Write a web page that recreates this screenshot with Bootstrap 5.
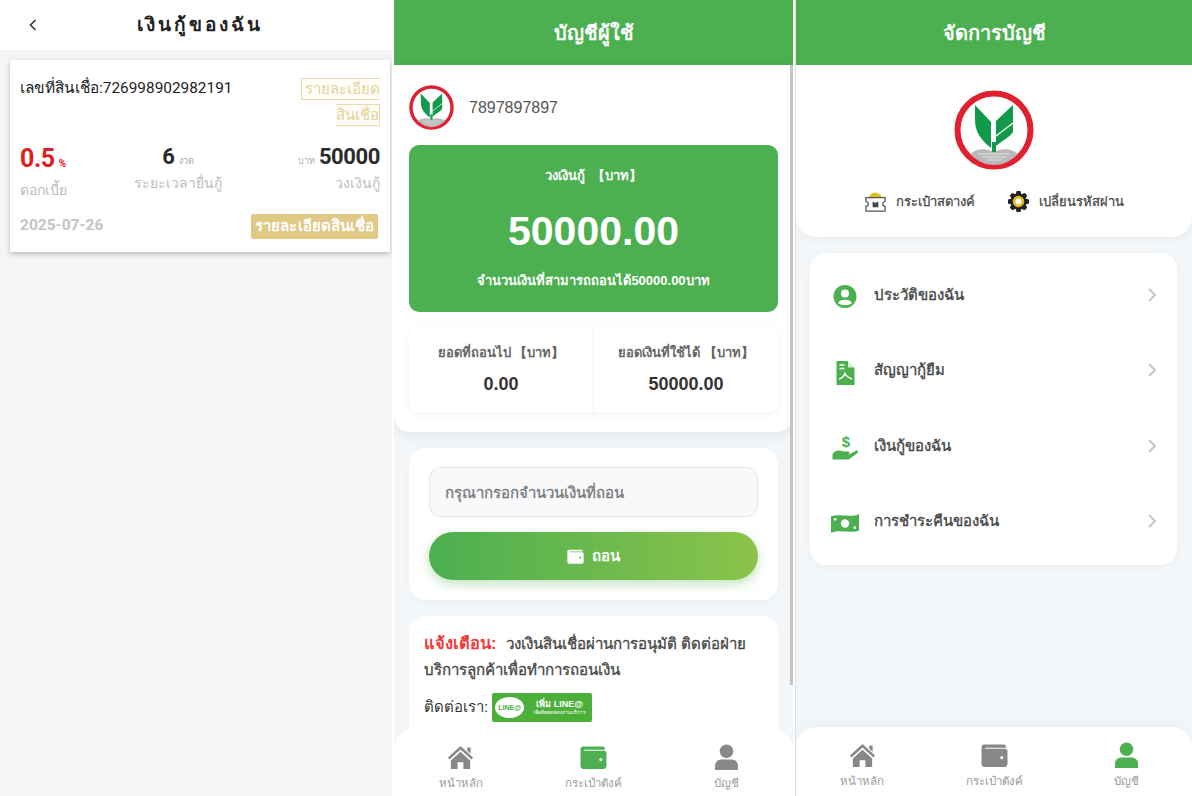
<!DOCTYPE html>
<html lang="th">
<head>
  <meta charset="UTF-8">
  <title>บัญชีผู้ใช้</title>
  <link href="https://cdn.jsdelivr.net/npm/bootstrap@5.3.0/dist/css/bootstrap.min.css" rel="stylesheet">
  <style>
    html, body { height: 796px; overflow: hidden; }
    body { font-family: "Liberation Sans", "Noto Sans", sans-serif; background: #fff; color: #333; }
    .frames { height: 796px; width: 1192px; }
    .frame { height: 796px; overflow: hidden; position: relative; }
    .frame-loan { width: 392px; background: #f5f5f5; margin-right: 2px; font-family: Roboto, sans-serif; }
    .frame-user { width: 399px; background: #f4f7f9; margin-right: 2px; }
    .frame-acct { width: 397px; background: #f4f7f9; border-left: 1px solid #ddd; }
    .loan-head { height: 50px; background: #fff; padding-left: 8px; }
    .loan-title { font-size: 19px; font-weight: 700; letter-spacing: 2.9px; color: #222; }
    .loan-back { left: 26px; top: 18px; width: 14px; height: 14px; }
    .loan-card { margin: 10px 2px 0 10px; background: #fff; padding: 16px 10px 14px; box-shadow: 0 2px 5px rgba(0,0,0,.25); height: 192px; }
    .loan-no { font-size: 15.4px; color: #222; line-height: 24px; }
    .loan-tag { width: 82px; text-align: right; font-size: 15px; line-height: 26px; color: #e3d19c; flex: none; }
    .loan-tag span { border: 1px solid #e8d9ae; padding: 1px 0 1px 3px; background: #fffdf6; }
    .loan-stats { margin-top: 12px; }
    .num-red { color: #e02020; font-size: 25px; font-weight: 700; letter-spacing: -.4px; }
    .num-dark { color: #2a2a2a; font-size: 22px; font-weight: 700; letter-spacing: -.4px; }
    .num-unit { font-size: 9px; color: #aaa; }
    .num-unit-red { font-size: 10px; color: #e02020; font-weight: 700; }
    .loan-lab { font-size: 14px; color: #bbb; }
    .loan-lab-first { margin-top: 2px; }
    .loan-mid { margin-right: 9px; }
    .loan-date { font-size: 15.5px; font-weight: 700; color: #c4c4c4; }
    .loan-foot { margin-top: 13px; }
    .loan-btn { background: #e0c885; color: #fff; font-size: 15px; font-weight: 700; border-radius: 2px; padding: 1px 4px; height: 25px; line-height: 23px; margin-right: 2px; letter-spacing: .05px; }
    .green-head { height: 65px; background: #4caf50; color: #fff; font-size: 20px; font-weight: 700; }
    .user-top { background: #fff; padding: 20px 15px 20px; border-radius: 0 0 16px 16px; box-shadow: 0 4px 14px rgba(0,0,0,.07); height: 367px; }
    .user-id { font-size: 16px; color: #555; margin-left: 15px; }
    .quota { background: #4caf50; color: #fff; border-radius: 10px; height: 167px; margin-top: 15px; padding-top: 21px; }
    .quota-lab { font-size: 13px; font-weight: 700; line-height: 20px; word-spacing: 3px; }
    .quota-num { font-size: 41px; font-weight: 700; line-height: 48px; margin-top: 21px; }
    .quota-sub { font-size: 13px; font-weight: 700; line-height: 20px; margin-top: 16px; }
    .stat-box { height: 86px; margin-top: 14px; border-radius: 10px; box-shadow: 0 2px 10px rgba(0,0,0,.05); }
    .stat-col { flex: 1 1 0; padding-top: 17px; }
    .stat-col + .stat-col { border-left: 1px solid #f3f3f3; }
    .stat-lab { font-size: 13px; font-weight: 700; color: #666; line-height: 20px; }
    .stat-num { font-size: 18px; font-weight: 700; color: #333; line-height: 24px; margin-top: 9px; }
    .draw-box { margin: 16px 15px 0; background: #fff; border-radius: 16px; padding: 19px 20px 20px; height: 152px; box-shadow: 0 2px 10px rgba(0,0,0,.03); }
    .draw-input { height: 50px; background: #f8f9fa; border: 1px solid #e4e6e8; border-radius: 12px; font-size: 15px; padding: 0 15px; }
    .draw-input::placeholder { color: #777; opacity: 1; -webkit-text-stroke: .3px #777; }
    .draw-btn { height: 48px; margin-top: 15px; border: 0; border-radius: 24px; background: linear-gradient(90deg, #4caf50, #8bc34a); color: #fff; font-size: 15px; font-weight: 700; box-shadow: 0 4px 12px rgba(76,175,80,.35); }
    .note-box { margin: 16px 15px 0; background: #fff; border-radius: 16px; padding: 14px 15px; height: 130px; }
    .note-text { font-size: 15.1px; line-height: 26px; color: #444; -webkit-text-stroke: .3px #444; }
    .note-red { color: #f03a3a; margin-right: 9px; font-size: 16.5px; font-weight: 700; -webkit-text-stroke: 0; }
    .note-line { font-size: 15px; color: #333; margin-top: 10px; }
    .line-badge { width: 100px; height: 29px; background: #4caf3a; border-radius: 2px; color: #fff; }
    .line-bubble { width: 29px; height: 21px; background: #fff; border-radius: 50%; color: #4caf3a; font-size: 7px; font-weight: 700; margin: 0 3px; flex: none; line-height: 21px; text-align: center; }
    .line-big { font-size: 9px; font-weight: 700; line-height: 10px; }
    .line-tiny { font-size: 5px; line-height: 7px; }
    .tabbar { position: absolute; left: 0; right: 0; bottom: 0; background: #fff; border-radius: 20px 20px 0 0; }
    .frame-user .tabbar { height: 66px; }
    .frame-acct .tabbar { height: 69px; box-shadow: 0 -4px 12px rgba(0,0,0,.03); }
    .tab-item { flex: 1 1 0; color: #999; font-size: 11.5px; line-height: 16px; }
    .tab-item svg { display: block; width: 27px; height: 27px; margin: 0 auto 4px; }
    .frame-user .tab-item { padding-top: 14px; }
    .frame-acct .tab-item { padding-top: 15px; }
    .scroll-thumb { position: absolute; right: 0; top: 65px; width: 3px; height: 620px; background: #c4c4c4; }
    .acct-top { background: #fff; height: 172px; border-radius: 0 0 20px 20px; padding-top: 25px; box-shadow: 0 2px 10px rgba(0,0,0,.05); }
    .acct-logo { width: 80px; height: 80px; }
    .acct-links { margin-top: 20px; font-size: 13px; color: #444; gap: 32px; -webkit-text-stroke: .25px #444; }
    .acct-links svg { width: 23px; height: 23px; margin-right: 9px; }
    .menu-box { margin: 16px 15px 0 14px; background: #fff; border-radius: 16px; padding: 4px 0 6px; height: 312px; box-shadow: 0 2px 10px rgba(0,0,0,.04); }
    .menu-row { height: 75.5px; padding: 0 20px 0 21px; font-size: 15px; color: #444; -webkit-text-stroke: .35px #444; }
    .menu-ic { width: 28px; height: 27px; margin-right: 15px; margin-top: 4px; flex: none; }
    .menu-arrow { width: 10px; height: 16px; }
  </style>
</head>
<body>
  <svg width="0" height="0" class="position-absolute">
    <symbol id="kbank" viewBox="0 0 80 80">
      <circle cx="40" cy="40" r="36.500" fill="#fff" stroke="#e0202e" stroke-width="6"/>
      <path d="M21 15 L37 32 V58 C27 50 21 42 21 30Z" fill="#119a4c"/>
      <path d="M59 15 V42 C56 47 49 50 42 56 V31Z" fill="#119a4c"/>
      <path d="M42 46 L59 33" stroke="#fff" stroke-width="1.300" fill="none"/>
      <path d="M16 64 C22 58 33 58 40 62 C47 58 58 58 64 64 C56 72 48 75 40 75 C32 75 24 72 16 64Z" fill="#b9b9b9"/>
      <path d="M24 64 H56 M28 67 H52 M33 70 H47" stroke="#eee" stroke-width=".8"/>
      <rect x="38" y="52" width="4" height="10" fill="#119a4c"/>
    </symbol>
    <symbol id="home" viewBox="0 0 28 26">
      <path d="M14 1 L27 13 L25.400 15 L14 4.600 L2.600 15 L1 13Z M21 2.500 H24.500 V9 L21 6Z"/>
      <path d="M14 7 L24 16 V25 H17 V18 H11 V25 H4 V16Z"/>
    </symbol>
    <symbol id="wallet" viewBox="0 0 26 26">
      <path fill-rule="evenodd" d="M3 2.500 H22 A2 2 0 0 1 24 4.500 V5.500 H4 V6.500 H23 A2.500 2.500 0 0 1 25.500 9 V21 A3 3 0 0 1 22.500 24 H3.500 A3 3 0 0 1 .5 21 V5 A2.500 2.500 0 0 1 3 2.500Z M20 13.500 A1.500 1.500 0 1 0 20 16.500 A1.500 1.500 0 1 0 20 13.500Z"/>
    </symbol>
    <symbol id="person" viewBox="0 0 26 26">
      <circle cx="13" cy="7" r="6.500"/>
      <path d="M2 25 V21 C2 17 5 15 8 15 H18 C21 15 24 17 24 21 V25Z"/>
    </symbol>
    <symbol id="arrow" viewBox="0 0 10 16">
      <path d="M2 2 L8 8 L2 14" fill="none" stroke="#c4c4c4" stroke-width="2"/>
    </symbol>
  </svg>

  <div class="frames d-flex">
    <!-- left: my loans -->
    <div class="frame frame-loan">
      <div class="loan-head d-flex align-items-center justify-content-center position-relative">
        <svg class="loan-back position-absolute" viewBox="0 0 14 14"><path d="M9.500 2 L4.500 7 L9.500 12" fill="none" stroke="#333" stroke-width="1.600"/></svg>
        <span class="loan-title">เงินกู้ของฉัน</span>
      </div>
      <div class="loan-card">
        <div class="d-flex justify-content-between">
          <div class="loan-no">เลขที่สินเชื่อ:726998902982191</div>
          <div class="loan-tag"><span>รายละเอียดสินเชื่อ</span></div>
        </div>
        <div class="loan-stats d-flex justify-content-between align-items-start">
          <div>
            <div><span class="num-red">0.5</span> <span class="num-unit-red">%</span></div>
            <div class="loan-lab loan-lab-first">ดอกเบี้ย</div>
          </div>
          <div class="loan-mid text-center">
            <div><span class="num-dark">6</span> <span class="num-unit">งวด</span></div>
            <div class="loan-lab">ระยะเวลายื่นกู้</div>
          </div>
          <div class="text-end">
            <div><span class="num-unit">บาท</span> <span class="num-dark">50000</span></div>
            <div class="loan-lab">วงเงินกู้</div>
          </div>
        </div>
        <div class="loan-foot d-flex justify-content-between align-items-center">
          <span class="loan-date">2025-07-26</span>
          <span class="loan-btn">รายละเอียดสินเชื่อ</span>
        </div>
      </div>
    </div>

    <!-- middle: user account -->
    <div class="frame frame-user">
      <div class="green-head d-flex align-items-center justify-content-center">บัญชีผู้ใช้</div>
      <div class="user-top">
        <div class="d-flex align-items-center">
          <svg width="45" height="45"><use href="#kbank"/></svg>
          <span class="user-id">7897897897</span>
        </div>
        <div class="quota text-center">
          <div class="quota-lab">วงเงินกู้ 【บาท】</div>
          <div class="quota-num">50000.00</div>
          <div class="quota-sub">จำนวนเงินที่สามารถถอนได้50000.00บาท</div>
        </div>
        <div class="stat-box d-flex text-center">
          <div class="stat-col">
            <div class="stat-lab">ยอดที่ถอนไป 【บาท】</div>
            <div class="stat-num">0.00</div>
          </div>
          <div class="stat-col">
            <div class="stat-lab">ยอดเงินที่ใช้ได้ 【บาท】</div>
            <div class="stat-num">50000.00</div>
          </div>
        </div>
      </div>
      <div class="draw-box">
        <input type="text" class="form-control draw-input" placeholder="กรุณากรอกจำนวนเงินที่ถอน">
        <button type="button" class="btn draw-btn w-100 d-flex align-items-center justify-content-center gap-2">
          <svg width="17" height="17" fill="#fff"><use href="#wallet"/></svg>ถอน
        </button>
      </div>
      <div class="note-box">
        <div class="note-text d-flex align-items-baseline"><span class="note-red">แจ้งเตือน:</span><span>วงเงินสินเชื่อผ่านการอนุมัติ ติดต่อฝ่าย</span></div>
        <div class="note-text">บริการลูกค้าเพื่อทำการถอนเงิน</div>
        <div class="note-line d-flex align-items-center gap-1">ติดต่อเรา:
          <div class="line-badge d-flex align-items-center">
            <div class="line-bubble">LINE@</div>
            <div class="text-center flex-grow-1">
              <div class="line-big">เพิ่ม LINE@</div>
              <div class="line-tiny">เพื่อติดต่อสอบถามบริการ</div>
            </div>
          </div>
        </div>
      </div>
      <div class="scroll-thumb"></div>
      <div class="tabbar d-flex text-center">
        <div class="tab-item"><svg fill="#888"><use href="#home"/></svg><div>หน้าหลัก</div></div>
        <div class="tab-item"><svg fill="#4caf50"><use href="#wallet"/></svg><div>กระเป๋าตังค์</div></div>
        <div class="tab-item"><svg fill="#888"><use href="#person"/></svg><div>บัญชี</div></div>
      </div>
    </div>

    <!-- right: manage account -->
    <div class="frame frame-acct">
      <div class="green-head d-flex align-items-center justify-content-center">จัดการบัญชี</div>
      <div class="acct-top text-center">
        <svg class="acct-logo"><use href="#kbank"/></svg>
        <div class="acct-links d-flex justify-content-center">
          <span class="d-flex align-items-center">
            <svg viewBox="0 0 24 24"><path d="M5 8 C6 3 13 1 17 5 L19 8Z" fill="#d8c020"/><path d="M2 8 H22 V12 A2.500 2.500 0 0 0 22 17 V22 H2 V17 A2.500 2.500 0 0 0 2 12Z" fill="#fff" stroke="#555" stroke-width="1.300"/><path d="M9 12 L12 13.500 L15 12 V18 H9Z" fill="#444"/></svg>กระเป๋าสตางค์
          </span>
          <span class="d-flex align-items-center">
            <svg viewBox="0 0 24 24"><path d="M10 1 H14 L15 4.500 L18.500 3 L21 5.500 L19.500 9 L23 10 V14 L19.500 15 L21 18.500 L18.500 21 L15 19.500 L14 23 H10 L9 19.500 L5.500 21 L3 18.500 L4.500 15 L1 14 V10 L4.500 9 L3 5.500 L5.500 3 L9 4.500Z" fill="#222"/><circle cx="12" cy="12" r="6" fill="#e0b81c"/><circle cx="12" cy="12" r="3.200" fill="#fff"/></svg>เปลี่ยนรหัสผ่าน
          </span>
        </div>
      </div>
      <div class="menu-box">
        <div class="menu-row d-flex align-items-center">
          <svg class="menu-ic" viewBox="0 0 27 27"><circle cx="13.500" cy="13.500" r="11.500" fill="#4caf50"/><circle cx="13.500" cy="10.500" r="4" fill="#fff"/><path d="M6.500 20 C8 15.500 19 15.500 20.500 20 C17 23 10 23 6.500 20Z" fill="#fff"/></svg>
          <span class="flex-grow-1">ประวัติของฉัน</span>
          <svg class="menu-arrow"><use href="#arrow"/></svg>
        </div>
        <div class="menu-row d-flex align-items-center">
          <svg class="menu-ic" viewBox="0 0 27 27"><path d="M5 2 H16 L23 9 V26 H5Z" fill="#4caf50"/><path d="M16.500 2 L23 8.500 H16.500Z" fill="#d6eed7"/><path d="M8 6 H13 M8 9.500 H13" stroke="#fff" stroke-width="1.500"/><path d="M7.500 20 C11 19 12.500 17 13.500 14.500 C15 17.500 17.500 19 20.500 20" fill="none" stroke="#fff" stroke-width="1.500"/></svg>
          <span class="flex-grow-1">สัญญากู้ยืม</span>
          <svg class="menu-arrow"><use href="#arrow"/></svg>
        </div>
        <div class="menu-row d-flex align-items-center">
          <svg class="menu-ic" viewBox="0 0 27 27"><path d="M1 20 C4 15.500 8 16 12 17.500 H17 C18.500 17.500 18.500 20.500 16.500 20.500 H12 H17.500 L25 16.500 C26.800 16 27 18.500 25.500 19.500 L17 25.500 H1Z" fill="#4caf50"/><text x="14.500" y="13" text-anchor="middle" font-size="15" font-weight="700" fill="#4caf50" font-family="Liberation Sans">$</text></svg>
          <span class="flex-grow-1">เงินกู้ของฉัน</span>
          <svg class="menu-arrow"><use href="#arrow"/></svg>
        </div>
        <div class="menu-row d-flex align-items-center">
          <svg class="menu-ic" viewBox="0 0 27 20"><path d="M0 3 C9 0 18 5 27 1 V17 C18 20 9 15 0 19Z" fill="#4caf50"/><circle cx="13.500" cy="10" r="4" fill="#fff"/><circle cx="4" cy="6" r="1.300" fill="#fff"/><circle cx="23" cy="14" r="1.300" fill="#fff"/></svg>
          <span class="flex-grow-1">การชำระคืนของฉัน</span>
          <svg class="menu-arrow"><use href="#arrow"/></svg>
        </div>
      </div>
      <div class="tabbar d-flex text-center">
        <div class="tab-item"><svg fill="#888"><use href="#home"/></svg><div>หน้าหลัก</div></div>
        <div class="tab-item"><svg fill="#888"><use href="#wallet"/></svg><div>กระเป๋าตังค์</div></div>
        <div class="tab-item"><svg fill="#4caf50"><use href="#person"/></svg><div>บัญชี</div></div>
      </div>
    </div>
  </div>

  <script src="https://cdn.jsdelivr.net/npm/bootstrap@5.3.0/dist/js/bootstrap.bundle.min.js"></script>
</body>
</html>
